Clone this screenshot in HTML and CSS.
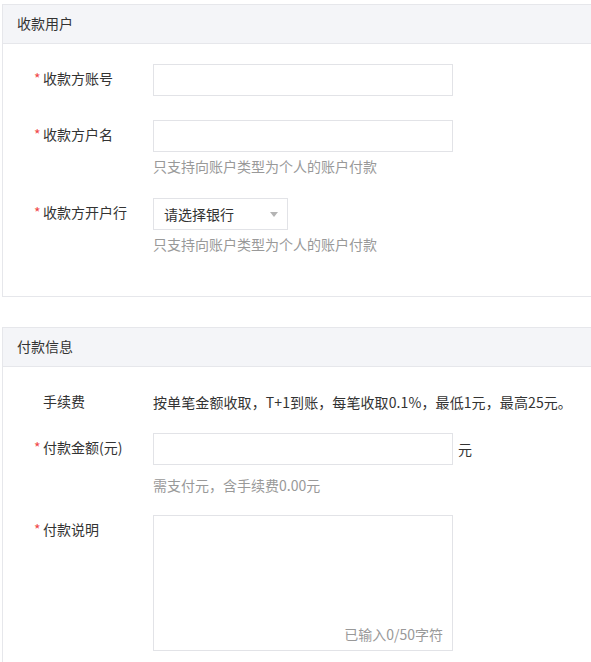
FILE: index.html
```html
<!DOCTYPE html>
<html lang="zh-CN">
<head>
<meta charset="utf-8">
<title>付款</title>
<link rel="stylesheet" href="styles.css">
</head>
<body>
<div class="page">
  <section class="panel panel-payee">
    <div class="panel-head">收款用户</div>
    <div class="panel-body">
      <div class="row row-gap24">
        <div class="label"><span class="star">*</span>收款方账号</div>
        <div class="field"><div class="input"></div></div>
      </div>
      <div class="row row-gap22">
        <div class="label"><span class="star">*</span>收款方户名</div>
        <div class="field">
          <div class="input"></div>
          <div class="hint hint-near">只支持向账户类型为个人的账户付款</div>
        </div>
      </div>
      <div class="row">
        <div class="label"><span class="star">*</span>收款方开户行</div>
        <div class="field">
          <div class="select"><span class="select-text">请选择银行</span><span class="caret"></span></div>
          <div class="hint hint-near">只支持向账户类型为个人的账户付款</div>
        </div>
      </div>
    </div>
  </section>

  <section class="panel panel-pay">
    <div class="panel-head">付款信息</div>
    <div class="panel-body">
      <div class="row row-gap16">
        <div class="label"><span class="star star-blank"></span>手续费</div>
        <div class="field"><div class="static">按单笔金额收取，T+1到账，每笔收取0.1%，最低1元，最高25元。</div></div>
      </div>
      <div class="row row-gap20">
        <div class="label"><span class="star">*</span>付款金额(元)</div>
        <div class="field">
          <div class="input-line"><div class="input"></div><span class="unit">元</span></div>
          <div class="hint hint-far">需支付元，含手续费0.00元</div>
        </div>
      </div>
      <div class="row">
        <div class="label"><span class="star">*</span>付款说明</div>
        <div class="field">
          <div class="textarea"><span class="counter">已输入0/50字符</span></div>
        </div>
      </div>
    </div>
  </section>
</div>
</body>
</html>
```

FILE: styles.css
```css
html, body {
  margin: 0;
  padding: 0;
  background: #ffffff;
}

body {
  font-family: "Noto Sans CJK SC", "Noto Sans", sans-serif;
  font-size: 14px;
  color: #333333;
}

.page {
  padding: 4px 0 0 2px;
}

.panel {
  border: 1px solid #e6e7eb;
  border-right: none;
  background: #ffffff;
}

.panel-pay {
  margin-top: 30px;
}

.panel-head {
  height: 38px;
  line-height: 36px;
  padding-left: 14px;
  background: #f4f5f8;
  border-bottom: 1px solid #e6e7eb;
  color: #333333;
}

.panel-body {
  padding: 20px 0 42px 0;
}

.panel-pay .panel-body {
  padding-bottom: 40px;
}

.row {
  display: flex;
  align-items: flex-start;
}

.row-gap24 { margin-bottom: 24px; }
.row-gap22 { margin-bottom: 22px; }
.row-gap20 { margin-bottom: 20px; }
.row-gap16 { margin-bottom: 16px; }

.label {
  width: 119px;
  padding-left: 31px;
  line-height: 29px;
  color: #333333;
  white-space: nowrap;
  flex: none;
}

.star {
  display: inline-block;
  width: 9px;
  color: #f04848;
}

.field {
  flex: none;
}

.input {
  width: 298px;
  height: 30px;
  border: 1px solid #e2e3e7;
  background: #ffffff;
}

.input-line {
  display: flex;
  align-items: center;
}

.unit {
  margin-left: 5px;
  line-height: 30px;
}

.select {
  display: flex;
  align-items: center;
  justify-content: space-between;
  padding: 0 9px 0 10px;
  box-sizing: border-box;
  width: 135px;
  height: 32px;
  border: 1px solid #e2e3e7;
}

.select-text {
  color: #333333;
  line-height: 30px;
}

.caret {
  width: 0;
  height: 0;
  border-left: 4px solid transparent;
  border-right: 4px solid transparent;
  border-top: 5px solid #b4b4b4;
  margin-top: 1px;
}

.hint {
  color: #999999;
  line-height: 20px;
}

.hint-near { margin-top: 4px; }
.hint-far { margin-top: 10px; }

.static {
  line-height: 30px;
  color: #333333;
  white-space: nowrap;
  letter-spacing: 0.1px;
}

.textarea {
  width: 298px;
  height: 134px;
  border: 1px solid #e2e3e7;
  display: flex;
  align-items: flex-end;
  justify-content: flex-end;
}

.counter {
  color: #999999;
  line-height: 20px;
  padding: 0 9px 6px 0;
}
```
